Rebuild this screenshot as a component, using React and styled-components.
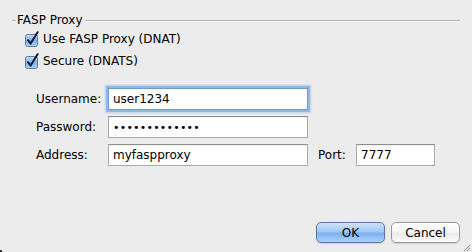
import React from "react";
import styled, { createGlobalStyle } from "styled-components";

const Global = createGlobalStyle`
  html, body { margin: 0; padding: 0; background: #ececec; }
  body { font-family: "DejaVu Sans", "Liberation Sans", sans-serif; }
`;

const Dialog = styled.div`
  position: relative;
  width: 472px;
  height: 252px;
  background: #ececec;
  display: flex;
  flex-direction: column;
  box-sizing: border-box;
  font-size: 12px;
  color: #000;
`;

const GroupHeader = styled.div`
  display: flex;
  align-items: center;
  padding: 12px 12px 0 12px;
  height: 16px;
`;

const Rule = styled.div`
  height: 0;
  border-top: 1px solid #b4b4b4;
  border-bottom: 1px solid #fbfbfb;
  width: ${(p) => (p.$grow ? "auto" : "4px")};
  flex: ${(p) => (p.$grow ? 1 : "none")};
  margin-top: 1px;
`;

const GroupTitle = styled.span`
  padding: 0 2px 0 1px;
  line-height: 16px;
`;

const Checks = styled.div`
  display: flex;
  flex-direction: column;
  gap: 6px;
  padding: 3px 0 0 25px;
`;

const CheckRow = styled.label`
  display: flex;
  align-items: center;
  gap: 4px;
  height: 16px;
`;

const Form = styled.div`
  display: grid;
  grid-template-columns: 72px 200px 48px 79px;
  grid-auto-rows: 22px;
  row-gap: 6px;
  align-items: center;
  padding: 19px 0 0 36px;
`;

const Label = styled.span`
  padding-left: ${(p) => (p.$pad ? "10px" : "0")};
`;

const Field = styled.div`
  box-sizing: border-box;
  height: 22px;
  border: 1px solid ${(p) => (p.$focus ? "#6f9bd1" : "#a9a9a9")};
  border-top-color: ${(p) => (p.$focus ? "#6f9bd1" : "#8e8e8e")};
  background: #fff;
  padding: 0 4px;
  display: flex;
  align-items: center;
  font-size: ${(p) => (p.$dots ? "11px" : "12px")};
  letter-spacing: ${(p) => (p.$dots ? "0.2px" : "0")};
  box-shadow: ${(p) =>
    p.$focus ? "0 0 0 2px #8fb6e6, 0 0 2px 3px #b9d0ec" : "inset 0 1px 0 #f0f0f0"};
`;

const Buttons = styled.div`
  margin-top: auto;
  display: flex;
  justify-content: flex-end;
  gap: 6px;
  padding: 0 12px 9px 0;
`;

const Button = styled.button`
  box-sizing: border-box;
  width: 69px;
  height: 21px;
  border-radius: 5px;
  font-family: inherit;
  font-size: 12px;
  color: #000;
  padding: 0;
  border: 1px solid ${(p) => (p.$primary ? "#5a76a8" : "#9a9a9a")};
  background: ${(p) =>
    p.$primary
      ? "linear-gradient(#cfe2fb 0%, #a2c8f3 45%, #7fb1ef 55%, #a9d2fb 100%)"
      : "linear-gradient(#ffffff 0%, #f6f6f6 45%, #ececec 55%, #fafafa 100%)"};
  box-shadow: 0 1px 1px rgba(0, 0, 0, 0.12);
`;

const Grip = styled.div`
  position: absolute;
  right: 1px;
  bottom: 1px;
  width: 10px;
  height: 10px;
`;

const Corner = styled.div`
  position: absolute;
  left: 0;
  bottom: 0;
  width: 2px;
  height: 2px;
  background: #333;
`;

function CheckBox() {
  return (
    <svg width="14" height="16" viewBox="0 0 14 16">
      <defs>
        <linearGradient id="cbg" x1="0" y1="0" x2="0" y2="1">
          <stop offset="0" stopColor="#c8def7" />
          <stop offset="0.5" stopColor="#7db3ee" />
          <stop offset="1" stopColor="#a8d2fa" />
        </linearGradient>
      </defs>
      <rect x="0.5" y="3.5" width="12" height="12" rx="2" fill="url(#cbg)" stroke="#5a7fae" />
      <path d="M3 9.2 L5.6 12.6 L12.6 1.2" fill="none" stroke="#141a26" strokeWidth="2" strokeLinecap="round" strokeLinejoin="round" />
    </svg>
  );
}

export default function App() {
  return (
    <>
      <Global />
      <Dialog>
        <GroupHeader>
          <Rule />
          <GroupTitle>FASP Proxy</GroupTitle>
          <Rule $grow />
        </GroupHeader>
        <Checks>
          <CheckRow>
            <CheckBox />
            <span>Use FASP Proxy (DNAT)</span>
          </CheckRow>
          <CheckRow>
            <CheckBox />
            <span>Secure (DNATS)</span>
          </CheckRow>
        </Checks>
        <Form>
          <Label>Username:</Label>
          <Field $focus>user1234</Field>
          <span />
          <span />
          <Label>Password:</Label>
          <Field $dots>•••••••••••••</Field>
          <span />
          <span />
          <Label>Address:</Label>
          <Field>myfaspproxy</Field>
          <Label $pad>Port:</Label>
          <Field>7777</Field>
        </Form>
        <Buttons>
          <Button $primary>OK</Button>
          <Button>Cancel</Button>
        </Buttons>
        <Grip>
          <svg width="10" height="10" viewBox="0 0 10 10">
            <path d="M9 3 L3 9 M9 6 L6 9" stroke="#8a8a8a" strokeWidth="1" />
          </svg>
        </Grip>
        <Corner />
      </Dialog>
    </>
  );
}
